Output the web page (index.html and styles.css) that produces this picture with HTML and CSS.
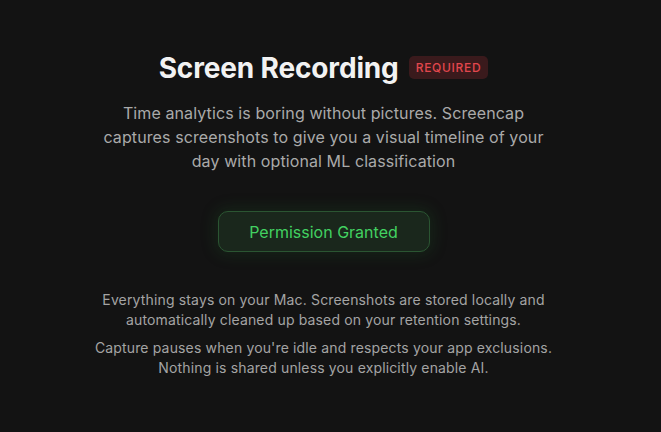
FILE: index.html
```html
<!DOCTYPE html>
<html>
<head>
<meta charset="utf-8">
<link rel="stylesheet" href="styles.css">
</head>
<body>
<main class="panel">
  <div class="title-row">
    <h1 class="title">Screen Recording</h1>
    <span class="badge">REQUIRED</span>
  </div>
  <p class="lead">Time analytics is boring without pictures. Screencap captures screenshots to give you a visual timeline of your day with optional ML classification</p>
  <button class="granted">Permission Granted</button>
  <div class="notes">
    <p class="note">Everything stays on your Mac. Screenshots are stored locally and automatically cleaned up based on your retention settings.</p>
    <p class="note">Capture pauses when you're idle and respects your app exclusions. Nothing is shared unless you explicitly enable AI.</p>
  </div>
</main>
</body>
</html>
```
FILE: styles.css
```css
html, body {
  margin: 0;
  padding: 0;
  background: #131313;
  height: 100%;
}
body {
  font-family: Inter, "Noto Sans", sans-serif;
  -webkit-font-smoothing: antialiased;
}
.panel {
  width: 647px;
  display: flex;
  flex-direction: column;
  align-items: center;
  padding-top: 52px;
}
.title-row {
  display: flex;
  align-items: center;
  gap: 10px;
  height: 32px;
}
.title {
  margin: 0;
  font-size: 28px;
  line-height: 32px;
  font-weight: 700;
  color: #f2f2f2;
  letter-spacing: -0.15px;
}
.badge {
  display: inline-block;
  background: #3a1a1c;
  color: #e2474d;
  font-size: 12px;
  font-weight: 500;
  letter-spacing: 0.7px;
  line-height: 23px;
  padding: 0 7px;
  border-radius: 5px;
  margin-top: -1px;
}
.lead {
  margin: 17px 0 0;
  width: 458px;
  text-align: center;
  font-size: 16px;
  line-height: 24px;
  letter-spacing: 0.1px;
  color: #aaaaaa;
}
.granted {
  margin-top: 38px;
  width: 212px;
  height: 41px;
  background: #1a271c;
  border: 1px solid #2b5532;
  border-radius: 10px;
  color: #42d161;
  font-family: Inter, "Noto Sans", sans-serif;
  font-size: 16px;
  box-shadow: 0 0 14px 4px rgba(30, 90, 40, 0.22);
}
.notes {
  margin-top: 38px;
  display: flex;
  flex-direction: column;
  gap: 8px;
  width: 480px;
}
.note {
  margin: 0;
  text-align: center;
  font-size: 14px;
  line-height: 20px;
  letter-spacing: 0.15px;
  color: #a4a4a4;
}
```
